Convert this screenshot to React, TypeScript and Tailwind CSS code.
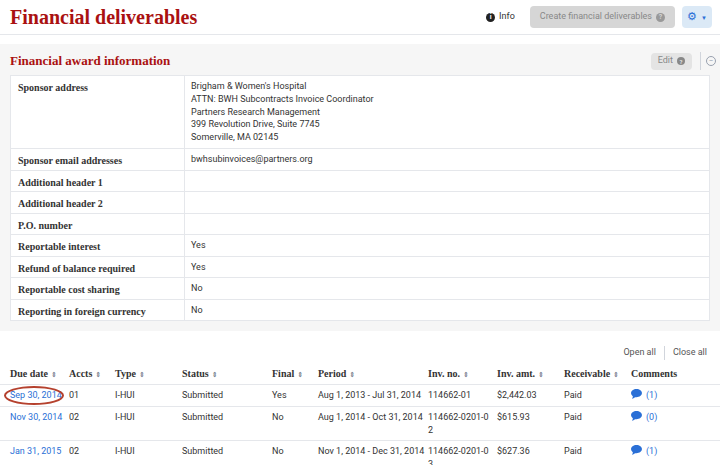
import React from "react";

const serif = { fontFamily: '"Liberation Serif", "DejaVu Serif", serif' };

const info: [string, React.ReactNode][] = [
  ["Sponsor address", (
    <div className="leading-[12.8px]">
      <div>Brigham &amp; Women's Hospital</div>
      <div>ATTN: BWH Subcontracts Invoice Coordinator</div>
      <div>Partners Research Management</div>
      <div>399 Revolution Drive, Suite 7745</div>
      <div>Somerville, MA 02145</div>
    </div>
  )],
  ["Sponsor email addresses", "bwhsubinvoices@partners.org"],
  ["Additional header 1", ""],
  ["Additional header 2", ""],
  ["P.O. number", ""],
  ["Reportable interest", "Yes"],
  ["Refund of balance required", "Yes"],
  ["Reportable cost sharing", "No"],
  ["Reporting in foreign currency", "No"],
];

const rows = [
  ["Sep 30, 2014", "01", "I-HUI", "Submitted", "Yes", "Aug 1, 2013 - Jul 31, 2014", "114662-01", "$2,442.03", "Paid", "(1)"],
  ["Nov 30, 2014", "02", "I-HUI", "Submitted", "No", "Aug 1, 2014 - Oct 31, 2014", "114662-0201-02", "$615.93", "Paid", "(0)"],
  ["Jan 31, 2015", "02", "I-HUI", "Submitted", "No", "Nov 1, 2014 - Dec 31, 2014", "114662-0201-03", "$627.36", "Paid", "(1)"],
];

const cols = ["Due date", "Accts", "Type", "Status", "Final", "Period", "Inv. no.", "Inv. amt.", "Receivable", "Comments"];
const widths = ["w-[59px]", "w-[46px]", "w-[67px]", "w-[90px]", "w-[46px]", "w-[110px]", "w-[69px]", "w-[67px]", "w-[67px]", "flex-1"];

const Sort = () => <span className="text-[7px] text-gray-500 ml-[3px]">⇕</span>;

const Bubble = () => (
  <svg width="11" height="10" viewBox="0 0 12 11" className="inline mr-1 align-[-1px]">
    <path d="M6 0C2.7 0 0 2 0 4.5c0 1.4.8 2.6 2 3.4L1.3 11l3.2-2c.5.1 1 .1 1.5.1 3.3 0 6-2 6-4.6S9.3 0 6 0z" fill="#2a6fd6" />
  </svg>
);

export default function App() {
  return (
    <div className="w-[720px] h-[465px] overflow-hidden bg-white text-[9px] text-[#333]" style={{ fontFamily: 'Roboto, "Liberation Sans", sans-serif' }}>
      <div className="flex items-center h-[35px] border-b border-gray-200 pl-[10px] pr-[8px]">
        <div className="text-[20px] font-bold text-[#a11] flex-1" style={serif}>Financial deliverables</div>
        <div className="flex items-center gap-1 mr-[15px]">
          <span className="w-[9px] h-[9px] rounded-full bg-[#222] text-white text-[7px] font-bold flex items-center justify-center">i</span>
          Info
        </div>
        <div className="h-[22px] px-[10px] bg-[#d6d6d6] text-[#888] rounded-sm flex items-center gap-1 mr-[7px]">
          Create financial deliverables
          <span className="w-[9px] h-[9px] rounded-full bg-[#999] text-[#d6d6d6] text-[7px] font-bold flex items-center justify-center">?</span>
        </div>
        <div className="h-[22px] w-[30px] bg-[#dbe9f6] rounded-sm flex items-center justify-center gap-1 text-[#2a6fd6]">
          <span className="text-[11px]">⚙</span><span className="text-[6px]">▼</span>
        </div>
      </div>

      <div className="mt-[9px] bg-[#f6f6f6] px-[10px] pt-[4px] pb-[10px]">
        <div className="flex items-center h-[26px]">
          <div className="flex-1 text-[13px] font-bold text-[#a11]" style={serif}>Financial award information</div>
          <div className="h-[17px] px-[7px] bg-[#e4e4e4] text-[#888] rounded-sm flex items-center gap-1 mr-[8px]">
            Edit <span className="w-[8px] h-[8px] rounded-full bg-[#888] text-[#e4e4e4] text-[6px] font-bold flex items-center justify-center">?</span>
          </div>
          <div className="border-l border-gray-300 pl-[5px] h-[18px] flex items-center mr-[-6px]">
            <span className="w-[10px] h-[10px] rounded-full border border-gray-400 text-gray-400 text-[8px] flex items-center justify-center leading-none">−</span>
          </div>
        </div>
        <div className="bg-white border border-gray-200 mt-[1px]">
          {info.map(([k, v], i) => (
            <div key={k} className={`flex ${i ? "border-t border-gray-200 h-[21.5px]" : "h-[72px]"}`}>
              <div className="w-[174px] px-[7px] py-[4px] font-bold border-r border-gray-200 text-[10px] whitespace-nowrap" style={serif}>
                {k}
              </div>
              <div className="flex-1 px-[6px] py-[4px]">{v}</div>
            </div>
          ))}
        </div>
      </div>

      <div className="flex justify-end items-center pr-[13px] mt-[14px] h-[16px] text-[#555]">
        <span className="pr-[8px] border-r border-gray-300">Open all</span>
        <span className="pl-[8px]">Close all</span>
      </div>
      <div className="flex items-center h-[23px] px-[10px] font-bold border-b border-gray-200 mt-[1px]" style={serif}>
        {cols.map((c, i) => (
          <div key={c} className={`${widths[i]} text-[10px] whitespace-nowrap`}>{c}{i < 9 && <Sort />}</div>
        ))}
      </div>
      {rows.map((r, ri) => (
        <div key={ri} className="flex px-[10px] py-[4px] border-b border-gray-200 leading-[12.5px] min-h-[22px]">
          {r.map((c, i) => (
            <div key={i} className={`${widths[i]} ${i === 0 ? "text-[#2a6fd6]" : ""} ${i === 6 ? "break-all pr-[6px]" : "whitespace-nowrap"}`}>
              {i === 0 && ri === 0 ? (
                <span className="relative">
                  <span className="absolute left-[-6px] top-[-4px] w-[60px] h-[19px] rounded-[50%] border-2 border-[#b5412e]" />
                  {c}
                </span>
              ) : i === 9 ? (
                <span className="text-[#2a6fd6]"><Bubble />{c}</span>
              ) : c}
            </div>
          ))}
        </div>
      ))}
    </div>
  );
}
